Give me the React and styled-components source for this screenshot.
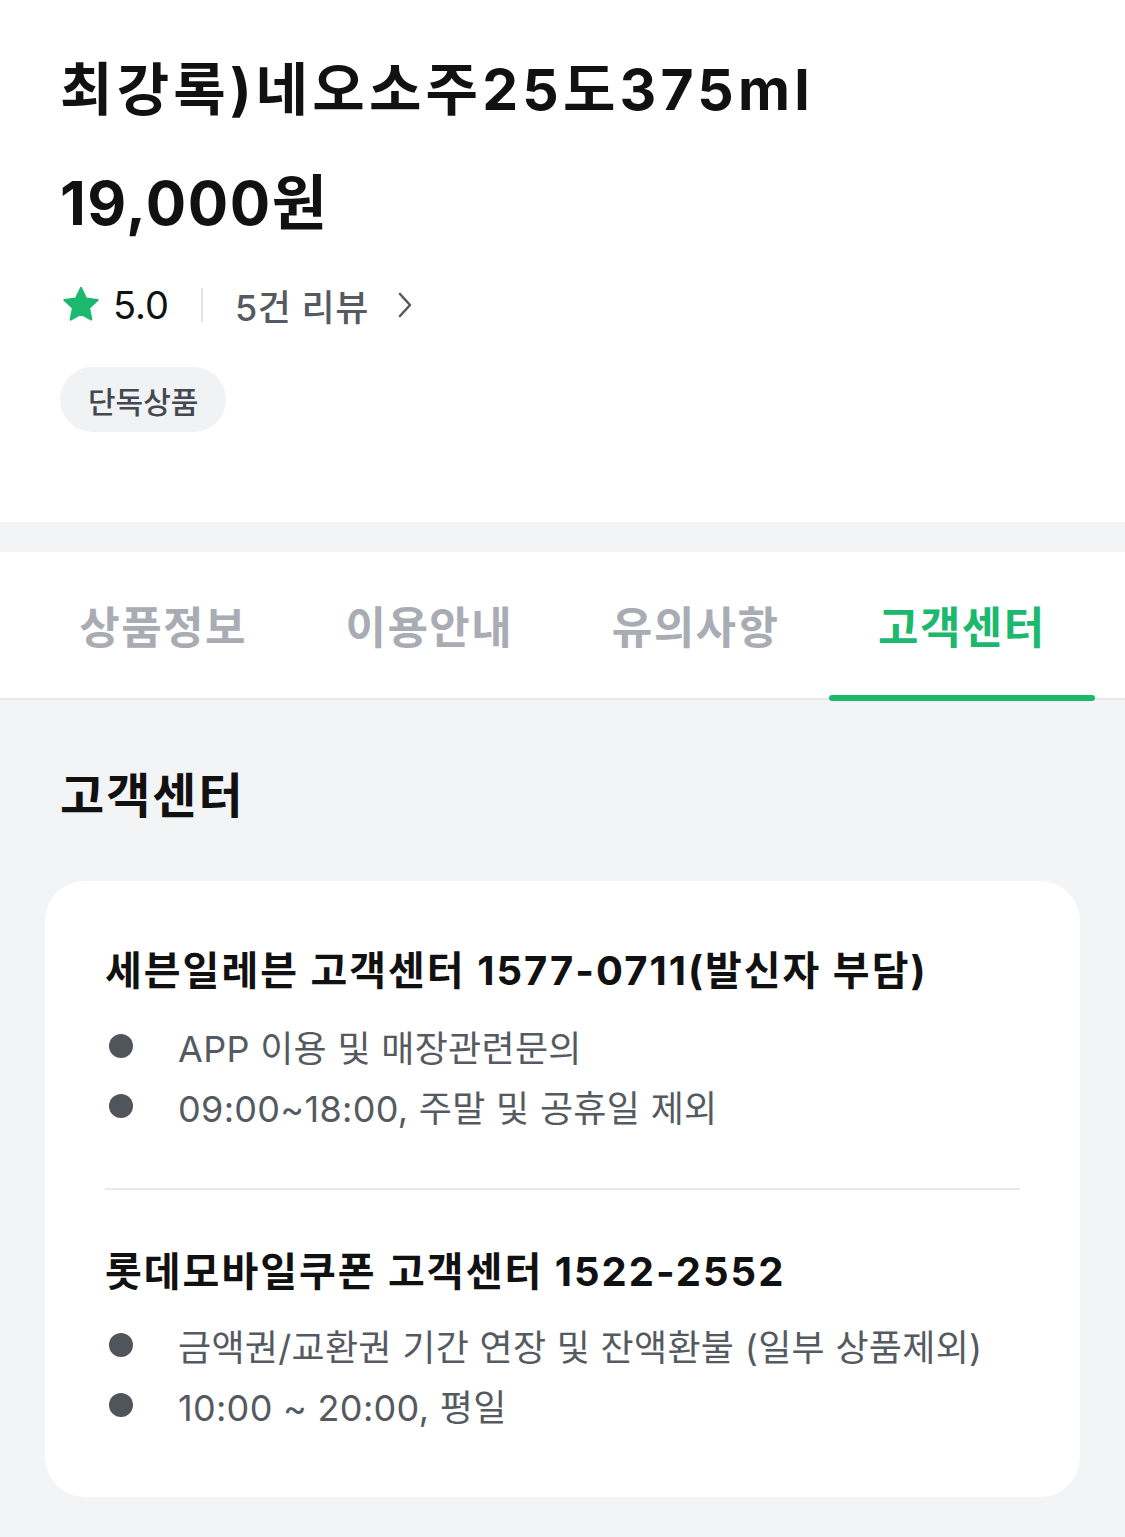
import React from 'react';
import styled, {createGlobalStyle} from 'styled-components';

const GlobalStyle = createGlobalStyle`
    html, body {
        margin: 0;
        padding: 0;
        background: #f3f4f6;
    }
    body {
        font-family: Inter, "Noto Sans CJK KR", "Noto Sans", sans-serif;
        color: #111;
    }
`;

const Page = styled.div`
    width: 1125px;
    min-height: 1537px;
    background: #f3f4f6;
`;

const TopSection = styled.section`
    background: #fff;
    padding: 56px 60px 90px;
`;

const Title = styled.h1`
    margin: 0;
    font-size: 57px;
    line-height: 68px;
    font-weight: 700;
    letter-spacing: 4.2px;
`;

const Price = styled.div`
    margin-top: 43px;
    font-size: 60px;
    line-height: 72px;
    font-weight: 700;
    letter-spacing: 1.5px;
`;

const RatingRow = styled.div`
    margin-top: 41px;
    height: 50px;
    display: flex;
    align-items: center;
`;

const Score = styled.span`
    margin-left: 11px;
    font-size: 38px;
    font-weight: 400;
    color: #111;
`;

const Bar = styled.span`
    width: 2px;
    height: 34px;
    background: #e2e3e6;
    margin: 0 32px;
`;

const Reviews = styled.span`
    font-size: 36px;
    font-weight: 500;
    color: #555a61;
    letter-spacing: 0.5px;
`;

const Badge = styled.span`
    display: inline-flex;
    align-items: center;
    margin-top: 37px;
    height: 65px;
    padding: 0 28px;
    border-radius: 33px;
    background: #f1f2f4;
    font-size: 30px;
    font-weight: 500;
    color: #444850;
`;

const Gap = styled.div`
    height: 30px;
    background: #f3f4f6;
`;

const TabBar = styled.nav`
    background: #fff;
    padding: 0 30px;
    display: grid;
    grid-template-columns: repeat(4, 1fr);
    border-bottom: 2px solid #e8e9ec;
`;

const Tab = styled.div`
    position: relative;
    height: 146px;
    display: flex;
    align-items: center;
    justify-content: center;
    font-size: 44px;
    font-weight: 700;
    letter-spacing: 1.5px;
    color: ${p => p.$active ? '#1cb86e' : '#a9acb3'};
    &::after {
        content: '';
        display: ${p => p.$active ? 'block' : 'none'};
        position: absolute;
        left: 0;
        right: 0;
        bottom: -3px;
        height: 6px;
        border-radius: 3px;
        background: #1cb86e;
    }
`;

const Body = styled.section`
    padding: 66px 45px 40px;
`;

const Heading = styled.h2`
    margin: 0 0 55px 15px;
    font-size: 48px;
    line-height: 60px;
    font-weight: 700;
    letter-spacing: 2px;
`;

const Card = styled.div`
    background: #fff;
    border-radius: 40px;
    padding: 62px 60px;
`;

const CenterTitle = styled.h3`
    margin: 0;
    font-size: 40px;
    line-height: 56px;
    font-weight: 700;
    letter-spacing: 2px;
`;

const List = styled.ul`
    list-style: none;
    margin: ${p => p.$top}px 0 0;
    padding: 0;
`;

const Item = styled.li`
    display: flex;
    align-items: center;
    height: 60px;
    font-size: 36px;
    color: #555a61;
    letter-spacing: 0.3px;
    &::before {
        content: '';
        flex: none;
        width: 24px;
        height: 24px;
        border-radius: 50%;
        background: #50545b;
        margin: 0 45px 0 4px;
    }
`;

const Divider = styled.hr`
    border: none;
    height: 2px;
    background: #e8e9ec;
    margin: 52px 0 54px;
`;

const Star = () => (
    <svg width="42" height="42" viewBox="0 0 24 24">
        <path
            d="M12 2.2l2.9 6.1 6.6.8-4.9 4.6 1.3 6.6L12 17l-5.9 3.3 1.3-6.6-4.9-4.6 6.6-.8z"
            fill="#1cb86e"
            stroke="#1cb86e"
            strokeWidth="1.2"
            strokeLinejoin="round"
        />
    </svg>
);

const Chevron = () => (
    <svg width="20" height="30" viewBox="0 0 20 30" style={{marginLeft: 26}}>
        <path d="M5 4l10 11-10 11" fill="none" stroke="#555a61" strokeWidth="2.6" strokeLinecap="round" strokeLinejoin="round"/>
    </svg>
);

const centers = [
    {
        title: '세븐일레븐 고객센터 1577-0711(발신자 부담)',
        items: ['APP 이용 및 매장관련문의', '09:00~18:00, 주말 및 공휴일 제외'],
        top: 17
    },
    {
        title: '롯데모바일쿠폰 고객센터 1522-2552',
        items: ['금액권/교환권 기간 연장 및 잔액환불 (일부 상품제외)', '10:00 ~ 20:00, 평일'],
        top: 15
    }
];

export default function App(){
    const tabs = ['상품정보', '이용안내', '유의사항', '고객센터'];

    return(
        <Page>
            <GlobalStyle/>
            <TopSection>
                <Title>최강록)네오소주25도375ml</Title>
                <Price>19,000원</Price>
                <RatingRow>
                    <Star/>
                    <Score>5.0</Score>
                    <Bar/>
                    <Reviews>5건 리뷰</Reviews>
                    <Chevron/>
                </RatingRow>
                <Badge>단독상품</Badge>
            </TopSection>
            <Gap/>
            <TabBar>
                {tabs.map((tab, index) => (
                    <Tab key={tab} $active={index === tabs.length - 1}>{tab}</Tab>
                ))}
            </TabBar>
            <Body>
                <Heading>고객센터</Heading>
                <Card>
                    {centers.map((center, index) => (
                        <React.Fragment key={center.title}>
                            {index > 0 && <Divider/>}
                            <CenterTitle>{center.title}</CenterTitle>
                            <List $top={center.top}>
                                {center.items.map(item => <Item key={item}>{item}</Item>)}
                            </List>
                        </React.Fragment>
                    ))}
                </Card>
            </Body>
        </Page>
    );
}
